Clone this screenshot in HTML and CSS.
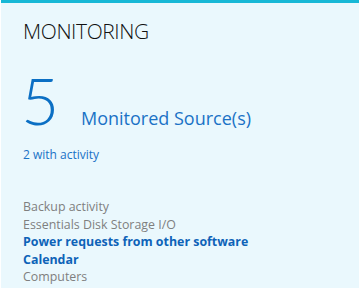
FILE: index.html
```html
<!DOCTYPE html>
<html>
<head>
<meta charset="utf-8">
<link rel="stylesheet" href="styles.css">
</head>
<body>
<div class="panel">
  <h1 class="title">MONITORING</h1>
  <div class="summary">
    <span class="count">5</span>
    <span class="count-label">Monitored Source(s)</span>
  </div>
  <div class="activity">2 with activity</div>
  <ul class="sources">
    <li class="src">Backup activity</li>
    <li class="src">Essentials Disk Storage I/O</li>
    <li class="src active">Power requests from other software</li>
    <li class="src active">Calendar</li>
    <li class="src">Computers</li>
  </ul>
</div>
</body>
</html>
```
FILE: styles.css
```css
html, body {
  margin: 0;
  padding: 0;
  background: #ffffff;
}
.panel {
  box-sizing: border-box;
  width: 358px;
  height: 288px;
  margin-left: 1px;
  border-top: 3px solid #17b8d6;
  background: #eaf8fd;
  padding: 0 0 0 22px;
  font-family: "Open Sans", "Noto Sans", sans-serif;
  overflow: hidden;
}
.title {
  margin: 0;
  padding-top: 14px;
  font-size: 21px;
  font-weight: 300;
  color: #111;
  line-height: 28px;
  letter-spacing: -0.4px;
}
.summary {
  display: flex;
  align-items: baseline;
  margin-top: 24px;
  height: 62px;
}
.count {
  font-family: "Lato", "Open Sans", sans-serif;
  font-size: 66px;
  font-weight: 300;
  line-height: 62px;
  color: #0b6fc4;
  width: 58px;
  margin-left: -2px;
  padding-right: 2px;
}
.count-label {
  font-size: 18px;
  color: #1a72c6;
  font-weight: 400;
}
.activity {
  margin-top: 16px;
  font-size: 12px;
  color: #1a72c6;
  line-height: 16px;
}
.sources {
  list-style: none;
  margin: 35px 0 0 0;
  padding: 0;
}
.src {
  font-size: 12.4px;
  line-height: 17.5px;
  color: #7f7f7f;
}
.src.active {
  font-weight: 700;
  color: #0e63b8;
}
```
